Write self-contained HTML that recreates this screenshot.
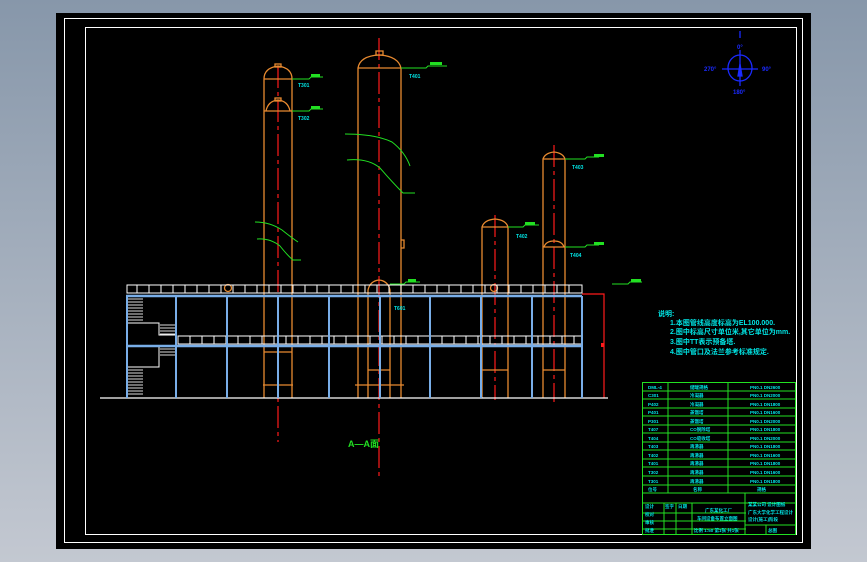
<!DOCTYPE html>
<html><head><meta charset="utf-8"><style>
html,body{margin:0;padding:0;width:867px;height:562px;overflow:hidden;background:linear-gradient(#8797aa,#c3c8d1);}
svg{display:block}
text{font-family:"Liberation Sans","Noto Sans CJK SC",sans-serif;font-weight:bold}
</style></head><body>
<svg width="867" height="562" viewBox="0 0 867 562" xmlns="http://www.w3.org/2000/svg">
<rect x="56" y="13" width="755" height="536" fill="#000"/>
<rect x="64.5" y="18.5" width="738" height="524" fill="none" stroke="#fff" stroke-width="1"/>
<rect x="85.5" y="27.5" width="711" height="507" fill="none" stroke="#fff" stroke-width="1"/>

<!-- centerlines -->
<g stroke="#ff1a1a" stroke-width="1.2" stroke-dasharray="22 4 4 4">
<line x1="278" y1="66" x2="278" y2="442"/>
<line x1="379" y1="38" x2="379" y2="480"/>
<line x1="554" y1="145" x2="554" y2="402"/>
<line x1="495" y1="215" x2="495" y2="400"/>
</g>
<path d="M582 294H604V398" fill="none" stroke="#ff1a1a" stroke-width="1.2"/>
<rect x="601" y="343" width="3" height="4" fill="#ff1a1a"/>

<!-- towers -->
<g fill="none" stroke="#e88a30" stroke-width="1.3">
<path d="M264 398V79Q264 68 278 66Q292 68 292 79V398"/><line x1="264" y1="79" x2="292" y2="79"/>
<path d="M266 111Q268 101 278 100Q288 101 290 111"/><line x1="264" y1="111" x2="292" y2="111"/>
<rect x="275" y="64" width="6" height="3"/><rect x="275" y="98" width="6" height="3"/>
<line x1="263" y1="385" x2="293" y2="385"/><line x1="264" y1="352" x2="292" y2="352"/>
<path d="M358 398V68Q360 56 379 55Q398 56 401 68V398"/><line x1="358" y1="68" x2="401" y2="68"/>
<rect x="376" y="51" width="7" height="4"/>
<path d="M368 398V290Q370 281 379 280Q388 281 390 290V398"/>
<line x1="355" y1="385" x2="404" y2="385"/><line x1="368" y1="370" x2="390" y2="370"/>
<path d="M401 240h3v8h-3"/>
<path d="M482 398V227Q484 220 495 219Q506 220 508 227V398"/><line x1="482" y1="227" x2="508" y2="227"/>
<line x1="482" y1="370" x2="508" y2="370"/>
<path d="M543 398V159Q545 153 554 152Q563 153 565 159V398"/><line x1="543" y1="159" x2="565" y2="159"/>
<path d="M544 247Q546 241 554 241Q562 241 564 247"/><line x1="543" y1="247" x2="565" y2="247"/>
<line x1="543" y1="370" x2="565" y2="370"/>
<circle cx="228" cy="288" r="3.5"/><circle cx="494" cy="288" r="3.5"/>
</g>
<line x1="100" y1="398" x2="608" y2="398" stroke="#fff" stroke-width="1.2"/>

<!-- platform -->
<g stroke="#fff" stroke-width="1" fill="none">
<rect x="127" y="285" width="455" height="8"/>
<rect x="178" y="336" width="404" height="8"/>
<path d="M137 285v8M149 285v8M161 285v8M173 285v8M185 285v8M197 285v8M209 285v8M221 285v8M233 285v8M245 285v8M257 285v8M269 285v8M281 285v8M293 285v8M305 285v8M317 285v8M329 285v8M341 285v8M353 285v8M365 285v8M377 285v8M389 285v8M401 285v8M413 285v8M425 285v8M437 285v8M449 285v8M461 285v8M473 285v8M485 285v8M497 285v8M509 285v8M521 285v8M533 285v8M545 285v8M557 285v8M569 285v8"/>
<path d="M190 336v8M202 336v8M214 336v8M226 336v8M238 336v8M250 336v8M262 336v8M274 336v8M286 336v8M298 336v8M310 336v8M322 336v8M334 336v8M346 336v8M358 336v8M370 336v8M382 336v8M394 336v8M406 336v8M418 336v8M430 336v8M442 336v8M454 336v8M466 336v8M478 336v8M490 336v8M502 336v8M514 336v8M526 336v8M538 336v8M550 336v8M562 336v8M574 336v8"/>
<path d="M127 323H159V335H176M127 367H159V346H176"/>
</g>
<g stroke="#ddd" stroke-width="1">
<path d="M128 299h15M128 302h15M128 305h15M128 308h15M128 311h15M128 314h15M128 317h15M128 320h15M160 325h15M160 328h15M160 331h15M160 334h15M160 349h15M160 352h15M160 355h15M128 370h15M128 373h15M128 376h15M128 379h15M128 382h15M128 385h15M128 388h15M128 391h15M128 394h15"/>
</g>
<g stroke="#79aee8" stroke-width="2.5">
<line x1="126" y1="296" x2="582" y2="296"/>
<line x1="126" y1="346" x2="582" y2="346"/>
<path d="M127 296V398M176 296V398M227 296V398M278 296V398M329 296V398M380 296V398M430 296V398M481 296V398M532 296V398M582 296V398" stroke-width="2"/>
</g>

<!-- green leaders -->
<g fill="none" stroke="#22e022" stroke-width="1">
<path d="M292 79h17l2-2h12"/><path d="M292 111h17l2-2h12"/>
<path d="M401 68h25l2-2h19"/>
<path d="M508 227h15l2-2h14"/>
<path d="M565 159h20l2-2h12"/><path d="M565 247h20l2-2h12"/>
<path d="M612 284h16l2-2h12"/>
<path d="M390 284h14l2-2h14"/>
<path d="M345 134Q375 134 392 142Q405 152 410 166"/>
<path d="M347 160Q368 158 380 168Q392 182 403 193h12"/>
<path d="M255 222Q270 222 282 230Q292 238 298 242"/>
<path d="M257 239Q270 238 280 246Q288 256 293 260h8"/>
</g>
<g fill="#22e022"><rect x="311" y="74" width="9" height="3"/><rect x="311" y="106" width="9" height="3"/><rect x="430" y="62" width="12" height="3"/><rect x="525" y="222" width="10" height="3"/><rect x="594" y="154" width="10" height="3"/><rect x="594" y="242" width="10" height="3"/><rect x="631" y="279" width="10" height="3"/><rect x="408" y="279" width="8" height="3"/></g>
<g fill="#00e5e5" font-size="5">
<text x="298" y="87">T301</text><text x="298" y="120">T302</text><text x="409" y="78">T401</text><text x="516" y="238">T402</text><text x="572" y="169">T403</text><text x="570" y="257">T404</text><text x="394" y="310">T601</text>
</g>
<text x="348" y="447" fill="#22e022" font-size="9" font-weight="normal">A—A面</text>

<!-- compass -->
<g stroke="#1a2aff" fill="none" stroke-width="1.3">
<ellipse cx="740" cy="68" rx="12" ry="13"/>
<line x1="740" y1="31" x2="740" y2="38"/>
<line x1="740" y1="50" x2="740" y2="86"/><line x1="722" y1="69" x2="758" y2="69"/>
<path d="M738 76l2-12 2 12z" fill="#1a2aff"/>
</g>
<g fill="#1a2aff" font-size="6"><text x="737" y="49">0°</text><text x="704" y="71">270°</text><text x="762" y="71">90°</text><text x="733" y="94">180°</text></g>

<!-- notes -->
<g fill="#00e5e5" font-size="7">
<text x="658" y="316">说明:</text>
<text x="670" y="325">1.本图管线高度标高为EL100.000.</text>
<text x="670" y="334">2.图中标高尺寸单位米,其它单位为mm.</text>
<text x="670" y="344">3.图中TT表示预备塔.</text>
<text x="670" y="354">4.图中管口及法兰参考标准规定.</text>
</g>

<!-- table -->
<g stroke="#22e022" stroke-width="1" fill="none">
<rect x="642.5" y="382.5" width="153" height="152"/>
<path d="M642 391h154M642 399h154M642 408h154M642 416h154M642 425h154M642 433h154M642 442h154M642 450h154M642 459h154M642 467h154M642 476h154M642 485h154M642 493h154"/>
<path d="M668 382v111M728 382v111"/>
<path d="M642 503h154M745 493v41M642 513h104M642 521h104M642 529h104M664 503v31M676 503v31M692 503v31M745 525h51M766 525v10"/>
</g>
<g fill="#00e5e5" font-size="4.5">
<text x="648" y="389">DML-4</text><text x="690" y="389">储罐规格</text><text x="750" y="389">PN0.1 DN2600</text>
<text x="648" y="397">C301</text><text x="690" y="397">冷凝器</text><text x="750" y="397">PN0.1 DN2000</text>
<text x="648" y="406">P402</text><text x="690" y="406">冷凝器</text><text x="750" y="406">PN0.1 DN1800</text>
<text x="648" y="414">P401</text><text x="690" y="414">蒸馏塔</text><text x="750" y="414">PN0.1 DN1600</text>
<text x="648" y="423">P301</text><text x="690" y="423">蒸馏塔</text><text x="750" y="423">PN0.1 DN2000</text>
<text x="648" y="431">T407</text><text x="690" y="431">CO脱除塔</text><text x="750" y="431">PN0.1 DN1800</text>
<text x="648" y="440">T404</text><text x="690" y="440">CO吸收塔</text><text x="750" y="440">PN0.1 DN2000</text>
<text x="648" y="448">T403</text><text x="690" y="448">再沸器</text><text x="750" y="448">PN0.1 DN1800</text>
<text x="648" y="457">T402</text><text x="690" y="457">再沸器</text><text x="750" y="457">PN0.1 DN1600</text>
<text x="648" y="465">T401</text><text x="690" y="465">再沸器</text><text x="750" y="465">PN0.1 DN1800</text>
<text x="648" y="474">T302</text><text x="690" y="474">再沸器</text><text x="750" y="474">PN0.1 DN1600</text>
<text x="648" y="483">T301</text><text x="690" y="483">再沸器</text><text x="750" y="483">PN0.1 DN1800</text>
<text x="648" y="491">位号</text><text x="693" y="491">名称</text><text x="757" y="491">规格</text>
<text x="645" y="508">设计</text><text x="665" y="508">签字</text><text x="678" y="508">日期</text>
<text x="645" y="516">校对</text><text x="645" y="524">审核</text><text x="645" y="532">批准</text>
<text x="705" y="512">广东某化工厂</text><text x="697" y="520">车间设备布置立面图</text>
<text x="694" y="532">比例 1:50 第1张 共1张</text>
<text x="748" y="506">某某公司 设计图纸</text><text x="748" y="514">广东大学化学工程设计</text><text x="748" y="521">设计(施工)阶段</text><text x="768" y="532">总图</text>
</g>
</svg>
</body></html>
